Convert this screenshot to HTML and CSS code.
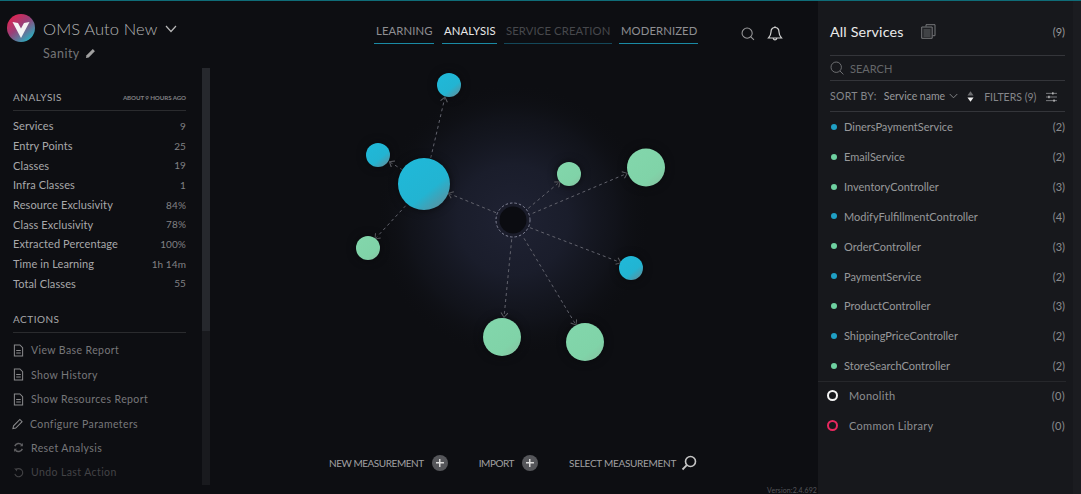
FILE: index.html
```html
<!DOCTYPE html>
<html lang="en">
<head>
<meta charset="utf-8">
<title>OMS Auto New</title>
<link rel="stylesheet" href="styles.css">
</head>
<body>
<div class="app">
  <aside class="left">
    <header class="brand">
      <svg class="logo" viewBox="0 0 28 28" aria-hidden="true">
        <defs>
          <linearGradient id="lg" x1=".1" y1=".05" x2=".85" y2=".95">
            <stop offset="0" stop-color="#e8214c"/>
            <stop offset=".45" stop-color="#9a3f78"/>
            <stop offset="1" stop-color="#1fb7c4"/>
          </linearGradient>
        </defs>
        <circle cx="14" cy="14" r="14" fill="url(#lg)"/>
        <path d="M5.500 8l5.500 1 3 5.500 3-5.500 5.500-1L14 24z" fill="#f4f4f4"/>
      </svg>
      <div class="brand-text">
        <div class="brand-title">
          <span>OMS Auto New</span>
          <svg class="chev" viewBox="0 0 12 8" aria-hidden="true"><path d="M1 1l5 5.500L11 1" fill="none" stroke="#b8b8b8" stroke-width="1.200"/></svg>
        </div>
        <div class="brand-sub">
          <span>Sanity</span>
          <svg class="pen-s" viewBox="0 0 12 12" aria-hidden="true"><path d="M1 11l.7-3L8.500 1.200l2.300 2.300L4 10.300z" fill="#a0a0a0"/></svg>
        </div>
      </div>
    </header>
    <div class="scrollarea">
      <div class="left-content">
        <div class="sec-head first"><span>ANALYSIS</span><small>ABOUT 9 HOURS AGO</small></div>
        <ul class="stats">
          <li><span>Services</span><span>9</span></li>
          <li><span>Entry Points</span><span>25</span></li>
          <li><span>Classes</span><span>19</span></li>
          <li><span>Infra Classes</span><span>1</span></li>
          <li><span>Resource Exclusivity</span><span>84%</span></li>
          <li><span>Class Exclusivity</span><span>78%</span></li>
          <li><span>Extracted Percentage</span><span>100%</span></li>
          <li><span>Time in Learning</span><span>1h 14m</span></li>
          <li><span>Total Classes</span><span>55</span></li>
        </ul>
        <div class="sec-head second"><span>ACTIONS</span></div>
        <ul class="actions">
          <li><svg class="ai" viewBox="0 0 12 14" aria-hidden="true"><use href="#doc"/></svg><span>View Base Report</span></li>
          <li><svg class="ai" viewBox="0 0 12 14" aria-hidden="true"><use href="#doc"/></svg><span>Show History</span></li>
          <li><svg class="ai" viewBox="0 0 12 14" aria-hidden="true"><use href="#doc"/></svg><span>Show Resources Report</span></li>
          <li class="tight"><svg class="ai" viewBox="0 0 12 14" aria-hidden="true"><path d="M1 12.500l.7-3L8.600 2.600l2.400 2.400-6.900 6.900z" fill="none" stroke="#8a8a8c" stroke-width="1.100"/></svg><span>Configure Parameters</span></li>
          <li><svg class="ai" viewBox="0 0 12 14" aria-hidden="true"><path d="M2 5.500A4.600 4.600 0 0 1 9.600 4M10.200 8.500A4.600 4.600 0 0 1 2.600 10" fill="none" stroke="#5f5f62" stroke-width="1.600"/><path d="M10.800 2.200v3.400H7.600zM1.200 11.800V8.400h3.200z" fill="#5f5f62"/></svg><span>Reset Analysis</span></li>
          <li class="off"><svg class="ai" viewBox="0 0 12 14" aria-hidden="true"><path d="M3 4.200A4.400 4.400 0 1 1 2 8.500" fill="none" stroke="#434346" stroke-width="1.200"/><path d="M1.200 2.400l3.400.4-.4 3.200z" fill="#434346"/></svg><span>Undo Last Action</span></li>
        </ul>
      </div>
      <div class="left-track"><div class="left-thumb"></div></div>
    </div>
  </aside>

  <main class="main">
    <svg class="graph" viewBox="0 0 608 494" aria-hidden="true">
      <defs>
        <radialGradient id="glow">
          <stop offset="0" stop-color="#1f2233" stop-opacity="1"/>
          <stop offset=".4" stop-color="#1a1d2b" stop-opacity="1"/>
          <stop offset=".75" stop-color="#12141c" stop-opacity=".8"/>
          <stop offset="1" stop-color="#0d0e12" stop-opacity="0"/>
        </radialGradient>
        <linearGradient id="blue" x1=".2" y1=".1" x2=".9" y2=".95">
          <stop offset="0" stop-color="#20b8d8"/>
          <stop offset=".6" stop-color="#22b4d2"/>
          <stop offset="1" stop-color="#5e8f9c"/>
        </linearGradient>
        <linearGradient id="green" x1=".2" y1=".1" x2=".9" y2=".95">
          <stop offset="0" stop-color="#82d6ab"/>
          <stop offset=".7" stop-color="#80d3a8"/>
          <stop offset="1" stop-color="#86c4a2"/>
        </linearGradient>
        <marker id="arr" viewBox="0 0 8 8" refX="7.500" refY="4" markerWidth="8" markerHeight="8" markerUnits="userSpaceOnUse" orient="auto">
          <path d="M3 .5L7.500 4 3 7.500" fill="none" stroke="#6c6d73" stroke-width="1"/>
        </marker>
      </defs>
      <circle cx="305" cy="220" r="138" fill="url(#glow)"/>
      <g class="links">
        <path d="M222.700 158L237 97"/>
        <path d="M194.700 170L181.300 161.700"/>
        <path d="M197.700 205.700L167 239"/>
        <path d="M288 212.700L240.300 193.300"/>
        <path d="M320.300 208.300L352 181.700"/>
        <path d="M324.700 213.300L419.300 173.300"/>
        <path d="M322 227.700L413 262.700"/>
        <path d="M303.700 239.300L296 317.300"/>
        <path d="M316 238.300L368 325"/>
      </g>
      <circle cx="305" cy="220" r="17" class="hub-ring"/>
      <circle cx="305" cy="220" r="13.500" fill="#0b0c11"/>
      <g class="nodes">
        <circle cx="241" cy="85" r="12" fill="url(#blue)"/>
        <circle cx="216" cy="184" r="26" fill="url(#blue)"/>
        <circle cx="170" cy="155" r="12" fill="url(#blue)"/>
        <circle cx="160" cy="248" r="12" fill="url(#green)"/>
        <circle cx="361" cy="174" r="12" fill="url(#green)"/>
        <circle cx="438" cy="167.500" r="19" fill="url(#green)"/>
        <circle cx="423" cy="268" r="12" fill="url(#blue)"/>
        <circle cx="294" cy="337" r="19" fill="url(#green)"/>
        <circle cx="377" cy="342" r="19" fill="url(#green)"/>
      </g>
    </svg>

    <div class="topbar">
      <nav class="tabs">
        <a class="tab t1">LEARNING</a>
        <a class="tab t2 active">ANALYSIS</a>
        <a class="tab t3 disabled">SERVICE CREATION</a>
        <a class="tab t4">MODERNIZED</a>
      </nav>
      <div class="top-icons">
        <svg class="ic-search" viewBox="0 0 16 16" aria-hidden="true"><circle cx="7" cy="7" r="5.800" fill="none" stroke="#9a9a9c" stroke-width="1.200"/><path d="M11 11l3.800 3.800" stroke="#9a9a9c" stroke-width="1.200"/></svg>
        <svg class="ic-bell" viewBox="0 0 16 16" aria-hidden="true"><path d="M8 1.500c-2.800 0-4 2.200-4 4.500 0 3-1.200 4.500-2.500 6h13C13.200 10.500 12 9 12 6c0-2.300-1.200-4.500-4-4.500zM6.200 12.500a1.900 1.900 0 0 0 3.600 0" fill="none" stroke="#d0d0d0" stroke-width="1.200"/><path d="M8 .3v1.500" stroke="#d0d0d0" stroke-width="1.200"/></svg>
      </div>
    </div>

    <div class="bottombar">
      <div class="bb-item b1"><span>NEW MEASUREMENT</span><i class="plus"></i></div>
      <div class="bb-item b2"><span>IMPORT</span><i class="plus"></i></div>
      <div class="bb-item b3"><span>SELECT MEASUREMENT</span>
        <svg class="ic-sel" viewBox="0 0 16 16" aria-hidden="true"><circle cx="9.500" cy="6.500" r="5" fill="none" stroke="#c6c6c6" stroke-width="1.600"/><path d="M5.800 10.200L1.500 14.500" stroke="#c6c6c6" stroke-width="1.800"/></svg>
      </div>
    </div>
    <div class="version">Version:2.4.692</div>
  </main>

  <aside class="right">
    <div class="r-head">
      <span class="r-title">All Services</span>
      <svg class="ic-docs" viewBox="0 0 15 15" aria-hidden="true"><path d="M5 2.500V.7h9v11h-2.500" fill="none" stroke="#77787b"/><path d="M.7 3h10.500v11.300H.7z" fill="#1f2024" stroke="#77787b"/><path d="M2.500 6h7M2.500 8h7M2.500 10h7M2.500 12h7" stroke="#77787b" stroke-width=".8"/></svg>
      <span class="r-count">(9)</span>
    </div>
    <div class="r-search">
      <svg class="ic-rs" viewBox="0 0 14 14" aria-hidden="true"><circle cx="6.200" cy="6.200" r="5.200" fill="none" stroke="#6e6f72" stroke-width="1"/><path d="M10 10l3.400 3.400" stroke="#6e6f72"/></svg>
      <span>SEARCH</span>
    </div>
    <div class="r-sort">
      <span class="sort-l">SORT BY:</span>
      <span class="sort-v">Service name</span>
      <svg class="sort-c" viewBox="0 0 10 6" aria-hidden="true"><path d="M.8.8L5 5 9.200.8" fill="none" stroke="#8d8e91"/></svg>
      <svg class="sort-a" viewBox="0 0 8 12" aria-hidden="true"><path d="M4 0l3.500 4.800h-7z" fill="#6c6d70"/><path d="M4 12L.5 7.200h7z" fill="#f2f2f2"/></svg>
      <span class="filters">FILTERS (9)</span>
      <svg class="ic-fil" viewBox="0 0 12 11" aria-hidden="true"><path d="M0 1.500h12M0 5.500h12M0 9.500h12" stroke="#85868a"/><path d="M7.500.2v2.600M3.200 4.200v2.600M8.800 8.200v2.600" stroke="#d0d0d0" stroke-width="1.300"/></svg>
    </div>
    <ul class="svc">
      <li><i class="dot b"></i><span>DinersPaymentService</span><em>(2)</em></li>
      <li><i class="dot g"></i><span>EmailService</span><em>(2)</em></li>
      <li><i class="dot g"></i><span>InventoryController</span><em>(3)</em></li>
      <li><i class="dot b"></i><span>ModifyFulfillmentController</span><em>(4)</em></li>
      <li><i class="dot g"></i><span>OrderController</span><em>(3)</em></li>
      <li><i class="dot b"></i><span>PaymentService</span><em>(2)</em></li>
      <li><i class="dot g"></i><span>ProductController</span><em>(3)</em></li>
      <li><i class="dot b"></i><span>ShippingPriceController</span><em>(2)</em></li>
      <li><i class="dot g"></i><span>StoreSearchController</span><em>(2)</em></li>
    </ul>
    <ul class="special">
      <li><i class="ring white"></i><span>Monolith</span><em>(0)</em></li>
      <li><i class="ring red"></i><span>Common Library</span><em>(0)</em></li>
    </ul>
  </aside>
</div>
<svg class="defs" aria-hidden="true">
  <symbol id="doc" viewBox="0 0 12 14"><path d="M1.500 1h6l3 3v9h-9zM3.500 7h5M3.500 9.800h5" fill="none" stroke="#8a8a8c" stroke-width="1.100"/></symbol>
</svg>
</body>
</html>
```
FILE: styles.css
```css
* { box-sizing: border-box; }
html, body { margin: 0; padding: 0; height: 100%; overflow: hidden; background: #0d0e12; }
body { font-family: Lato, "Open Sans", sans-serif; color: #a9a9ab; }
ul { list-style: none; margin: 0; padding: 0; }
em { font-style: normal; }
i { display: block; }
.defs { width: 0; height: 0; position: absolute; }

.app { display: flex; width: 1081px; height: 494px; border-top: 1px solid #0f6c78; }

/* left */
.left { width: 210px; flex: none; display: flex; flex-direction: column; background: #0d0e12; }
.brand { height: 67px; display: flex; padding: 13px 0 0 7px; gap: 8px; }
.logo { width: 28px; height: 28px; flex: none; }
.brand-title { display: flex; align-items: center; height: 29px; font-size: 16.500px; letter-spacing: .1px; color: #b4b4b5; font-weight: 300; }
.chev { width: 12px; height: 8px; margin-left: 8px; }
.brand-sub { display: flex; align-items: center; font-size: 12.500px; letter-spacing: .5px; color: #747477; margin-top: 2px; height: 17px; }
.pen-s { width: 11px; height: 11px; margin-left: 5px; }
.scrollarea { flex: 1; display: flex; padding-bottom: 9px; min-height: 0; }
.left-content { width: 202px; padding: 0 16px 0 13px; overflow: hidden; }
.left-track { width: 8px; background: #191a1e; flex: none; }
.left-thumb { height: 263px; background: #26282d; }

.sec-head { display: flex; justify-content: space-between; align-items: center; border-bottom: 1px solid #2a2b2e; font-size: 10px; letter-spacing: .5px; color: #a8a8aa; }
.sec-head.first { height: 24px; margin-top: 19px; padding-bottom: 3px; }
.sec-head.second { height: 25px; margin-top: 15px; padding-bottom: 2px; }
.sec-head small { font-size: 6.200px; font-weight: 700; letter-spacing: -.1px; color: #808083; }

.stats { padding-top: 5px; }
.stats li { height: 19.700px; display: flex; justify-content: space-between; align-items: center; font-size: 11px; letter-spacing: .1px; color: #a8a8aa; }
.stats li span:last-child { color: #818184; font-size: 10px; }

.actions { padding-top: 5px; }
.actions li { height: 24.400px; display: flex; align-items: center; font-size: 10.500px; letter-spacing: .4px; color: #77777a; }
.ai { width: 11px; height: 13px; flex: none; margin-right: 7px; }
.actions li.tight .ai { margin-right: 7px; margin-left: -1px; }
.actions li.off { color: #434346; }

/* main */
.main { flex: 1; min-width: 0; position: relative; display: flex; flex-direction: column; background: #0d0e12; }
.graph { position: absolute; left: -2px; top: -1px; width: 608px; height: 494px; }
.links path { stroke: #62636d; stroke-width: 1; stroke-dasharray: 3 3; fill: none; marker-end: url(#arr); }
.nodes circle { filter: drop-shadow(0 0 4px #08090c); }
.hub-ring { fill: #1a1c2a; stroke: #85879a; stroke-width: 1; stroke-dasharray: 2.500 2; }

.topbar { position: relative; height: 52px; display: flex; padding: 19px 0 0 160px; }
.tabs { display: flex; height: 24px; }
.tab { display: block; height: 24px; padding: 4px 2px 0; font-size: 11.300px; letter-spacing: .1px; color: #8f8f92; border-bottom: 1px solid #1a8aa5; text-align: center; white-space: nowrap; }
.t1 { width: 60px; margin-left: 4px; }
.t2 { width: 55px; margin-left: 8px; color: #e8e8e8; }
.t3 { width: 108px; margin-left: 7px; color: #47484c; border-bottom-color: #14485a; }
.t4 { width: 79px; margin-left: 7px; }
.top-icons { display: flex; align-items: flex-start; gap: 12px; margin-left: 43px; padding-top: 6px; }
.ic-search { width: 14px; height: 14px; margin-top: 1px; }
.ic-bell { width: 16px; height: 16px; }

.bottombar { position: relative; margin-top: auto; height: 16px; margin-bottom: 23px; display: flex; align-items: center; padding-left: 119px; font-size: 10px; letter-spacing: -.45px; color: #a0a0a2; }
.bb-item { display: flex; align-items: center; white-space: nowrap; }
.plus { width: 16px; height: 16px; border-radius: 50%; margin-left: 8px; background:
  linear-gradient(#dadada, #dadada) center / 8px 1.500px no-repeat,
  linear-gradient(#dadada, #dadada) center / 1.500px 8px no-repeat,
  #55565a; }
.b2 { margin-left: 31px; }
.b3 { margin-left: 31px; letter-spacing: -.28px; }
.ic-sel { width: 16px; height: 16px; margin-left: 5px; }
.version { position: absolute; right: 1px; bottom: 0; font-size: 7px; letter-spacing: .1px; color: #55565a; }

/* right */
.right { width: 263px; flex: none; padding: 0 7px 0 0; background: #17181c; position: relative; border-right: 8px solid #1b1c20; }
.r-head { height: 55px; margin-left: 12px; margin-right: 1px; display: flex; align-items: center; padding-top: 6px; border-bottom: 1px solid #34353a; position: relative; }
.r-title { font-size: 14.300px; letter-spacing: .15px; color: #eaeaea; }
.ic-docs { width: 15px; height: 15px; margin-left: 17px; }
.r-count { margin-left: auto; margin-right: 0; font-size: 11px; color: #98989a; }
.r-search { height: 25px; margin-left: 12px; margin-right: 1px; display: flex; align-items: center; border-bottom: 1px solid #34353a; font-size: 11px; letter-spacing: 0; color: #66676a; gap: 6px; }
.ic-rs { width: 14px; height: 14px; }
.r-sort { height: 31px; margin-left: 12px; margin-right: 1px; display: flex; align-items: center; border-bottom: 1px solid #34353a; font-size: 10.500px; color: #85868a; }
.sort-l { letter-spacing: .3px; }
.sort-v { margin-left: 7px; color: #98989b; letter-spacing: 0; }
.sort-c { width: 9px; height: 6px; margin-left: 4px; }
.sort-a { width: 7px; height: 11px; margin-left: 9px; }
.filters { margin-left: 10px; letter-spacing: 0; padding-top: 2px; }
.ic-fil { width: 11px; height: 10px; margin-left: 10px; margin-top: 2px; }

.svc { border-bottom: 1px solid #26272b; }
.svc li { height: 29.850px; display: flex; align-items: center; padding: 0 0 0 13px; font-size: 11px; letter-spacing: 0; color: #98989b; }
.dot { width: 6px; height: 6px; border-radius: 50%; margin-right: 7px; }
.dot.b { background: #1f9fc4; }
.dot.g { background: #6ed0a0; }
.svc li em, .special li em { margin-left: auto; font-size: 11px; color: #8a8b8e; margin-right: 1px; }
.special { margin-top: -1px; }
.special li { height: 29.700px; display: flex; align-items: center; padding: 0 0 0 9px; font-size: 11px; letter-spacing: .3px; color: #8d8e91; }
.ring { width: 11px; height: 11px; border-radius: 50%; border: 2px solid; margin-right: 11px; }
.ring.white { border-color: #f4f4f4; }
.ring.red { border-color: #e8285f; }
```
